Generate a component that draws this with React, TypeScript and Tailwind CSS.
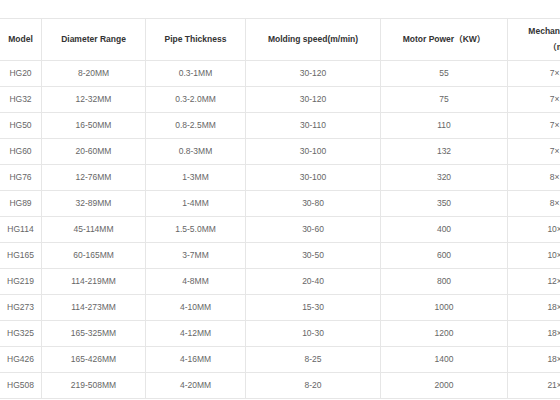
const headers = ["Model", "Diameter Range", "Pipe Thickness", "Molding speed(m/min)", "Motor Power（KW）"];

const widths = ["w-[42px]", "w-[104px]", "w-[100px]", "w-[135px]", "w-[127px]", "w-[106px]"];

const rows = [
	["HG20", "8-20MM", "0.3-1MM", "30-120", "55", "7×1.2"],
	["HG32", "12-32MM", "0.3-2.0MM", "30-120", "75", "7×1.2"],
	["HG50", "16-50MM", "0.8-2.5MM", "30-110", "110", "7×1.5"],
	["HG60", "20-60MM", "0.8-3MM", "30-100", "132", "7×1.5"],
	["HG76", "12-76MM", "1-3MM", "30-100", "320", "8×1.5"],
	["HG89", "32-89MM", "1-4MM", "30-80", "350", "8×1.5"],
	["HG114", "45-114MM", "1.5-5.0MM", "30-60", "400", "10×1.8"],
	["HG165", "60-165MM", "3-7MM", "30-50", "600", "10×1.8"],
	["HG219", "114-219MM", "4-8MM", "20-40", "800", "12×2.0"],
	["HG273", "114-273MM", "4-10MM", "15-30", "1000", "18×2.5"],
	["HG325", "165-325MM", "4-12MM", "10-30", "1200", "18×2.5"],
	["HG426", "165-426MM", "4-16MM", "8-25", "1400", "18×3.0"],
	["HG508", "219-508MM", "4-20MM", "8-20", "2000", "21×3.0"],
];

export default function App() {
	return (
		<div className="w-[560px] h-[400px] overflow-hidden bg-white pt-[18px] font-['Liberation_Sans','Noto_Sans_CJK_SC',sans-serif]">
			<table className="-ml-px table-fixed border-collapse w-[615px]">
				<colgroup>
					{widths.map((w, i) => (
						<col key={i} className={w} />
					))}
				</colgroup>
				<thead>
					<tr className="h-[42px]">
						{headers.map((h) => (
							<th key={h} className="border border-[#e6e6e6] text-center text-[8.5px] font-bold text-[#333] px-1">
								{h}
							</th>
						))}
						<th className="border border-[#e6e6e6] text-center text-[8.5px] font-bold text-[#333] leading-[15.5px]">
							Mechanical size
							<br />
							（m）
						</th>
					</tr>
				</thead>
				<tbody>
					{rows.map((row) => (
						<tr key={row[0]} className="h-[26px]">
							{row.map((cell, i) => (
								<td key={i} className="border border-[#e6e6e6] text-center text-[8.5px] text-[#666]">
									{cell}
								</td>
							))}
						</tr>
					))}
				</tbody>
			</table>
		</div>
	);
}
